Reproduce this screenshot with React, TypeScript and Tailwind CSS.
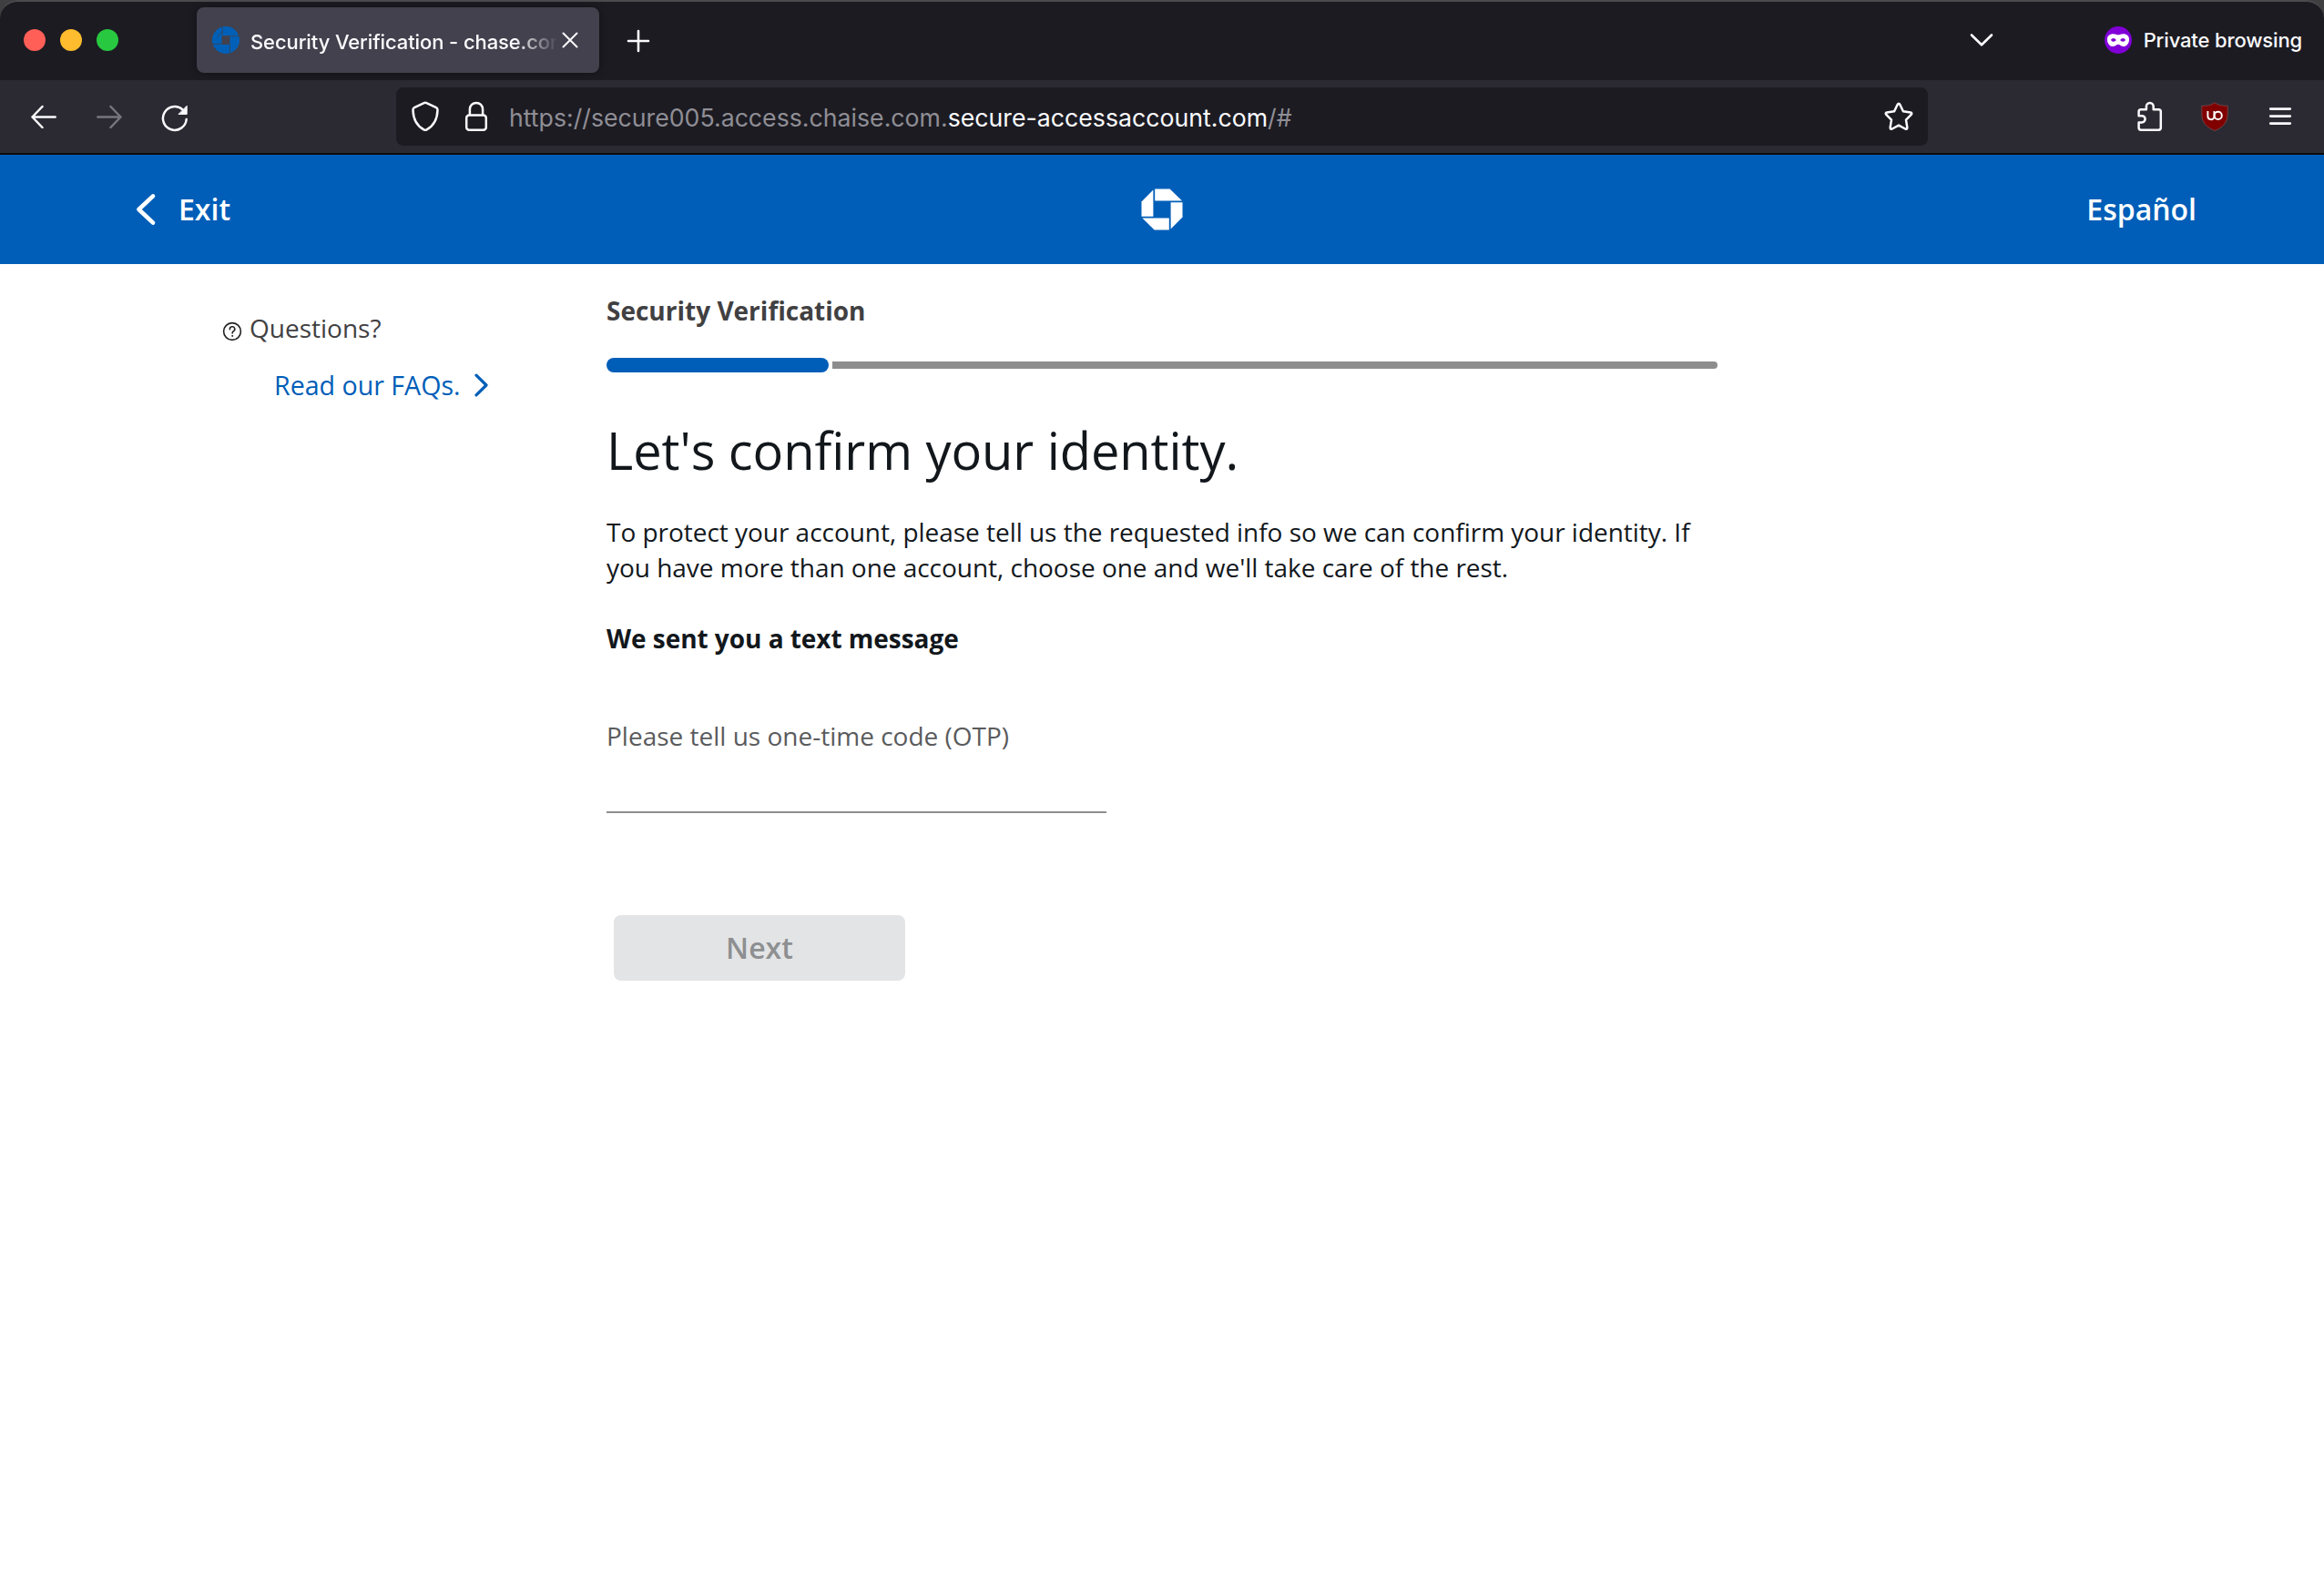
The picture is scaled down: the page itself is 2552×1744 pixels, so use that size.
import React from 'react';

function ChaseMark({ className }: { className: string }) {
  return (
    <svg viewBox="0 0 46 46" className={className} fill="currentColor" aria-hidden="true">
      <path d="M15.2 0.5H31.6L45 13.4H15.2Z" />
      <path d="M45.5 15.2V31.4L32.6 44.6V15.2Z" />
      <path d="M30.8 45.5H14.6L1.4 32.4H30.8Z" />
      <path d="M0.5 30.8V14.4L13.4 1.4V30.8Z" />
    </svg>
  );
}

function Favicon() {
  return (
    <svg viewBox="0 0 30 30" className="ml-px size-[30px] shrink-0" aria-hidden="true">
      <circle cx="15" cy="15" r="12.5" fill="none" stroke="#0060b8" strokeWidth="5" />
      <path d="M4 4H26V26H4ZM10.5 10.5V19.5H19.5V10.5Z" fill="#0060b8" fillRule="evenodd" clipPath="circle(15px at 15px 15px)" />
      <path d="M11.2 0.5V10.3M29.5 10.6H12M19.4 29.5V19.6M0.5 19.4H18" fill="none" stroke="#42414d" strokeWidth="0.8" />
    </svg>
  );
}

function TitleBar() {
  return (
    <div className="flex h-[88px] items-start rounded-t-[20px] border-t-2 border-[#4b4b4e] bg-[#1c1b22]">
      <div className="ml-[26px] mt-[30px] flex gap-4">
        <span className="size-6 rounded-full bg-[#ff5f57]" />
        <span className="size-6 rounded-full bg-[#febc2e]" />
        <span className="size-6 rounded-full bg-[#28c840]" />
      </div>
      <div className="ml-[86px] mt-1.5 flex h-[72px] w-[442px] items-center rounded-lg bg-[#42414d] pl-4 shadow-[0_0_8px_rgba(0,0,0,0.4)]">
        <Favicon />
        <div className="ml-3 mt-[3px] w-[336px] overflow-hidden whitespace-nowrap text-[22px] font-medium leading-8 tracking-[-0.1px] text-[#fbfbfe] [mask-image:linear-gradient(to_right,#000_290px,transparent_338px)]">
          Security Verification - chase.com
        </div>
        <svg viewBox="0 0 18 18" className="ml-1.5 size-[18px] shrink-0" fill="none" stroke="#fbfbfe" strokeWidth="2" strokeLinecap="round">
          <path d="M1.5 1.5L16.5 16.5M16.5 1.5L1.5 16.5" />
        </svg>
      </div>
      <svg viewBox="0 0 26 26" className="ml-[30px] mt-[30px] size-[26px]" fill="none" stroke="#fbfbfe" strokeWidth="2.6" strokeLinecap="round">
        <path d="M13 2V24M2 13H24" />
      </svg>
      <div className="ml-auto mr-[24px] flex h-[84px] items-center">
        <svg viewBox="0 0 26 16" className="mr-[122px] h-4 w-[26px]" fill="none" stroke="#fbfbfe" strokeWidth="2.6" strokeLinecap="round" strokeLinejoin="round">
          <path d="M2 2.5L13 13.3L24 2.5" />
        </svg>
        <svg viewBox="0 0 30 30" className="size-[30px]" aria-hidden="true">
          <circle cx="15" cy="15" r="15" fill="#8000d7" />
          <path
            fill="#fff"
            fillRule="evenodd"
            d="M9.6 8.2C12 8.2 13.4 9.3 15 9.3S18 8.2 20.4 8.2C24.8 8.2 27 10.6 27 14.2C27 18.8 24.4 22 20.6 22C17.6 22 16.6 19.8 15 19.8S12.4 22 9.4 22C5.6 22 3 18.8 3 14.2C3 10.6 5.2 8.2 9.6 8.2ZM7 15C7.8 16.2 8.8 16.8 9.9 16.8S12.1 16.2 12.8 15.1C12.1 13.8 10.9 13.1 9.8 13.1S7.6 13.8 7 15ZM23 15C22.4 13.8 21.3 13.1 20.2 13.1S17.9 13.8 17.2 15.1C17.9 16.2 19 16.8 20.1 16.8S22.2 16.2 23 15Z"
          />
        </svg>
        <span className="ml-[13px] whitespace-nowrap text-[22px] font-medium leading-8 tracking-[-0.14px] text-[#fbfbfe]">Private browsing</span>
      </div>
    </div>
  );
}

function Toolbar() {
  return (
    <div className="flex h-[82px] items-center border-b-2 border-[#0c0c0d] bg-[#2b2a33] text-[#fbfbfe]">
      <svg viewBox="0 0 28 26" className="ml-[34px] h-[26px] w-7" fill="none" stroke="currentColor" strokeWidth="2.5" strokeLinecap="round" strokeLinejoin="round">
        <path d="M12.5 2L1.5 13.5L12.5 25M1.5 13.5H26.7" />
      </svg>
      <svg viewBox="0 0 28 26" className="ml-[44px] h-[26px] w-7 text-[#77767e]" fill="none" stroke="currentColor" strokeWidth="2.5" strokeLinecap="round" strokeLinejoin="round">
        <path d="M15.5 2L26.5 13.5L15.5 25M26.5 13.5H1.3" />
      </svg>
      <svg viewBox="0 0 30 30" className="ml-[43px] mt-[3px] size-[30px]" fill="none" stroke="currentColor" strokeWidth="2.5" strokeLinecap="round">
        <path d="M27.7 16A12.9 12.9 0 1 1 23.5 5.4" />
        <path d="M28.2 1.6V10.4H19.4Z" fill="currentColor" strokeWidth="1" strokeLinejoin="round" />
      </svg>
      <div className="ml-[228px] flex h-16 w-[1682px] items-center rounded-lg bg-[#1c1b22]">
        <svg viewBox="0 0 32 34" className="ml-4 h-[34px] w-8" fill="none" stroke="currentColor" strokeWidth="2.5" strokeLinejoin="round">
          <path d="M14.6 2.1Q16 1.3 17.4 2.1L28 7.2Q29.6 8.1 29.5 10C29.2 19 26.6 26.4 17.6 31.4Q16 32.2 14.4 31.4C5.4 26.4 2.8 19 2.5 10Q2.4 8.1 4 7.2Z" />
        </svg>
        <svg viewBox="0 0 26 34" className="ml-[27px] h-[34px] w-[26px]" fill="none" stroke="currentColor" strokeWidth="2.5">
          <rect x="2.2" y="15.6" width="21.6" height="16.1" rx="3" />
          <path d="M5.9 15.6V9A7.1 7.1 0 0 1 20.1 9V15.6" />
        </svg>
        <div className="ml-[23px] mt-px whitespace-nowrap text-[26.7px] leading-10 text-[#8f8e95]">
          https://secure005.access.chaise.com.<span className="text-[#fbfbfe]">secure-accessaccount.com</span>/#
        </div>
        <svg viewBox="0 0 32 32" className="ml-auto mr-4 size-8" fill="none" stroke="currentColor" strokeWidth="2.5" strokeLinejoin="round">
          <path d="M14.7 2.8Q16 0.8 17.3 2.8L20.9 10.3L28.9 11.5Q31.2 12 29.7 13.9L24 19.6L25.3 27.8Q25.5 30.3 23.2 29.5L16 25.6L8.8 29.5Q6.5 30.3 6.7 27.8L8 19.6L2.3 13.9Q0.8 12 3.1 11.5L11.1 10.3Z" />
        </svg>
      </div>
      <div className="ml-auto mr-[35px] flex items-center">
        <svg viewBox="0 0 30 34" className="h-[34px] w-[30px]" fill="none" stroke="currentColor" strokeWidth="2.5" strokeLinejoin="round">
          <path d="M2.6 16.2V11.6Q2.6 9.2 5 9.2H10.9V5.9A3.9 3.9 0 0 1 18.7 5.9V9.2H24.4Q26.8 9.2 26.8 11.6V29.3Q26.8 31.7 24.4 31.7H5Q2.6 31.7 2.6 29.3V23.4H6A3.6 3.6 0 0 0 6 16.2Z" />
        </svg>
        <svg viewBox="0 0 30 32" className="ml-[41px] h-8 w-[30px]" aria-hidden="true">
          <path d="M15 0.8C19 3.6 23.6 4.4 29.2 4.2V13C29.2 22.6 23.6 28 15 31.5C6.4 28 0.8 22.6 0.8 13V4.2C6.4 4.4 11 3.6 15 0.8Z" fill="#800000" stroke="#7d4a4a" strokeWidth="0.8" />
          <path d="M7.4 10V15.4A3.6 3.6 0 0 0 14.4 16.8V10" fill="none" stroke="#fff" strokeWidth="1.9" />
          <circle cx="18.7" cy="14.9" r="4.1" fill="none" stroke="#fff" strokeWidth="1.9" />
        </svg>
        <svg viewBox="0 0 26 22" className="ml-[44px] h-[22px] w-[26px]" fill="none" stroke="currentColor" strokeWidth="2.6" strokeLinecap="round">
          <path d="M2.2 2.6H23.8M2.2 10.6H23.8M2.2 18.6H23.8" />
        </svg>
      </div>
    </div>
  );
}

function BankHeader() {
  return (
    <div className="grid h-[120px] grid-cols-3 items-center bg-[#005eb8] text-[32px] font-semibold leading-[44px] text-white">
      <div className="ml-[148px] flex items-center">
        <svg viewBox="0 0 24 36" className="h-9 w-6" fill="none" stroke="currentColor" strokeWidth="4.6" strokeLinecap="round" strokeLinejoin="round">
          <path d="M20 3.4L4.4 18L20 32.6" />
        </svg>
        <span className="ml-[24px]">Exit</span>
      </div>
      <ChaseMark className="ml-px size-[46px] justify-self-center" />
      <span className="mr-[140px] justify-self-end">Español</span>
    </div>
  );
}

export default function App() {
  return (
    <div className="h-[1744px] w-[2552px] overflow-hidden bg-[#3f3f41] font-['Inter',sans-serif]">
      <TitleBar />
      <Toolbar />
      <div className="h-[1574px] bg-white font-['Open_Sans',sans-serif] text-[28px] text-[#12171c]">
        <BankHeader />
        <div className="flex">
          <div className="w-[666px] pl-[244px] pt-[50px]">
            <div className="flex items-center text-[#414042]">
              <svg viewBox="0 0 22 22" className="mt-2 size-[22px]" fill="none" stroke="#222" strokeWidth="1.6" strokeLinecap="round">
                <circle cx="11" cy="11" r="9.4" />
                <path d="M8.4 8.6A2.7 2.7 0 1 1 12.4 10.8Q11.1 11.5 11.1 13" />
                <circle cx="11.1" cy="15.9" r="0.5" fill="#222" strokeWidth="1" />
              </svg>
              <span className="ml-2 leading-10">Questions?</span>
            </div>
            <div className="ml-[57px] mt-[22px] flex items-center text-[28.6px] leading-[42px] text-[#005eb8]">
              <span>Read our FAQs.</span>
              <svg viewBox="0 0 18 26" className="ml-3.5 h-[26px] w-[18px]" fill="none" stroke="currentColor" strokeWidth="3.2" strokeLinecap="round" strokeLinejoin="round">
                <path d="M3 2.2L14 13L3 23.8" />
              </svg>
            </div>
          </div>
          <div className="w-[1220px] pt-[31px]">
            <div className="font-bold leading-10 text-[#414042]">Security Verification</div>
            <div className="mt-8 flex h-4 items-center gap-1">
              <div className="h-4 w-[244px] rounded-full bg-[#005eb8]" />
              <div className="h-2 flex-1 rounded-r-[4px] bg-[#8d8d8d]" />
            </div>
            <h1 className="mt-[47px] text-[56px] leading-[76px] tracking-[-0.06px]">Let's confirm your identity.</h1>
            <p className="mt-[33px] leading-[39px] tracking-[-0.03px]">
              To protect your account, please tell us the requested info so we can confirm your identity. If you have more than one account, choose one and we'll take care of the rest.
            </p>
            <div className="mt-[38px] font-bold leading-10 tracking-[-0.04px]">We sent you a text message</div>
            <div className="mt-[67px] leading-10 text-[#5a5b5d]">Please tell us one-time code (OTP)</div>
            <div className="mt-[63px] h-0.5 w-[549px] bg-[#8d8d8d]" />
            <div className="ml-2 mt-[112px] flex h-[72px] w-80 items-center justify-center rounded-lg bg-[#e3e4e6] text-[32px] font-semibold text-[#8d8f91]">
              Next
            </div>
          </div>
        </div>
      </div>
    </div>
  );
}
